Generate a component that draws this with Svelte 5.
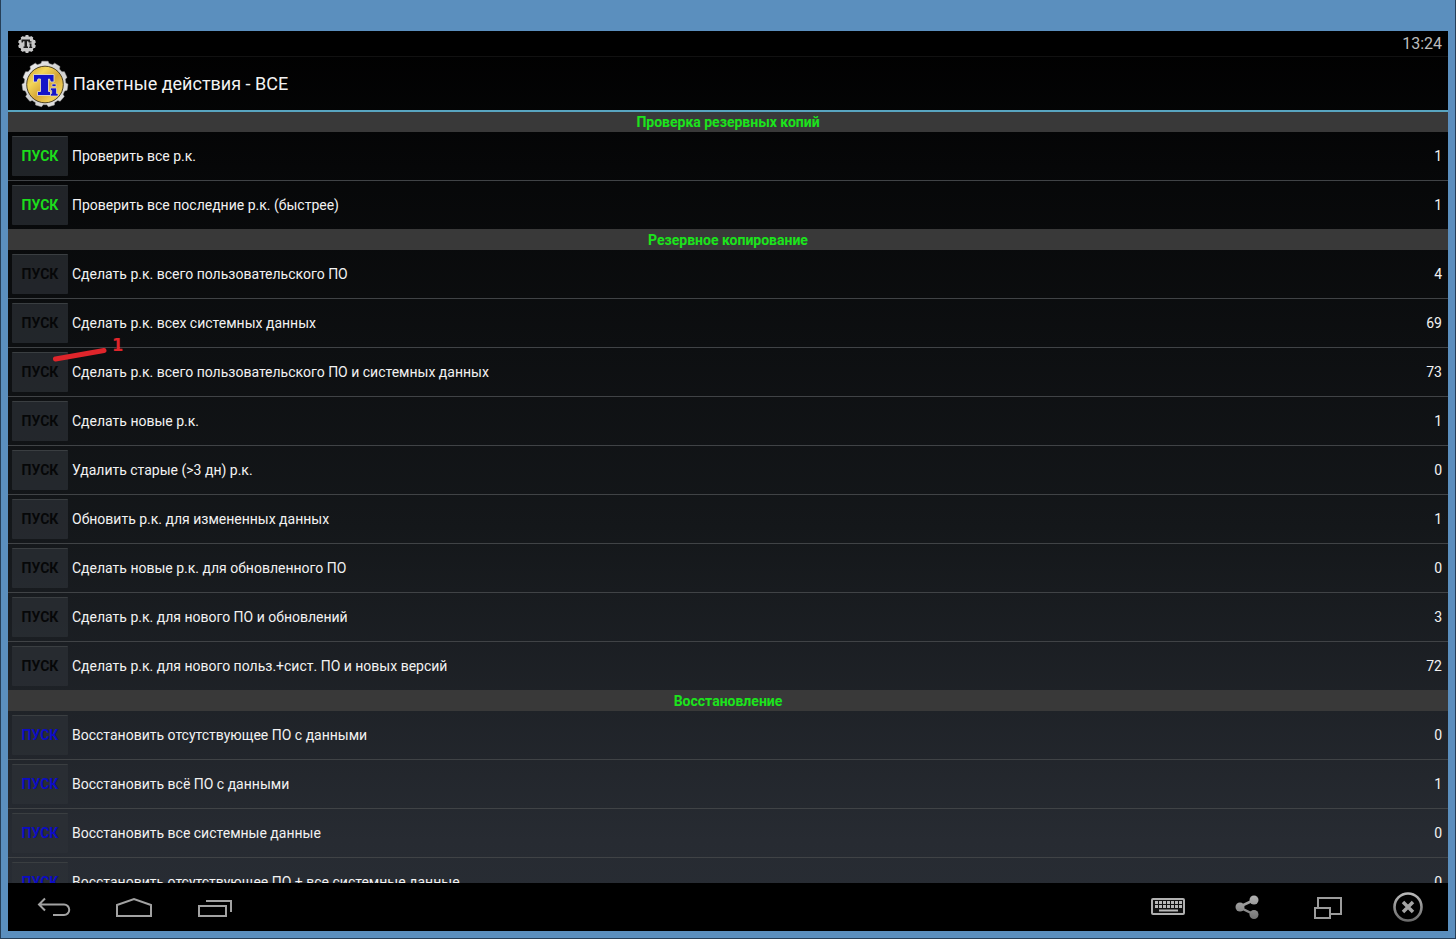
<script>
  const sections = [
    {
      title: 'Проверка резервных копий',
      tone: 'green',
      items: [
        { label: 'Проверить все р.к.', count: 1 },
        { label: 'Проверить все последние р.к. (быстрее)', count: 1 }
      ]
    },
    {
      title: 'Резервное копирование',
      tone: 'black',
      items: [
        { label: 'Сделать р.к. всего пользовательского ПО', count: 4 },
        { label: 'Сделать р.к. всех системных данных', count: 69 },
        { label: 'Сделать р.к. всего пользовательского ПО и системных данных', count: 73, mark: '1' },
        { label: 'Сделать новые р.к.', count: 1 },
        { label: 'Удалить старые (>3 дн) р.к.', count: 0 },
        { label: 'Обновить р.к. для измененных данных', count: 1 },
        { label: 'Сделать новые р.к. для обновленного ПО', count: 0 },
        { label: 'Сделать р.к. для нового ПО и обновлений', count: 3 },
        { label: 'Сделать р.к. для нового польз.+сист. ПО и новых версий', count: 72 }
      ]
    },
    {
      title: 'Восстановление',
      tone: 'blue',
      items: [
        { label: 'Восстановить отсутствующее ПО с данными', count: 0 },
        { label: 'Восстановить всё ПО с данными', count: 1 },
        { label: 'Восстановить все системные данные', count: 0 },
        { label: 'Восстановить отсутствующее ПО + все системные данные', count: 0 }
      ]
    }
  ];

  // Outline of a round cog with `teeth` teeth, centred on c.
  function cog(c, outer, inner, teeth) {
    const step = (Math.PI * 2) / teeth;
    const pts = [];
    for (let i = 0; i < teeth; i++) {
      const a = i * step - Math.PI / 2;
      for (const [k, r] of [[-0.34, inner], [-0.24, outer], [0.24, outer], [0.34, inner]]) {
        pts.push(`${(c + r * Math.cos(a + k * step)).toFixed(2)},${(c + r * Math.sin(a + k * step)).toFixed(2)}`);
      }
    }
    return pts.join(' ');
  }

  const keys = [0, 1, 2, 3, 4, 5, 6];
</script>

<div class="frame">
  <div class="screen">
    <div class="status">
      <svg width="18" height="18" viewBox="0 0 18 18" aria-hidden="true">
        <polygon points={cog(9, 9, 7.8, 10)} fill="#c8c8c8" />
        <path d="M3.500 4.500h8.500v3h-1.300l-.5-1.300H9v5.300h1v1.500H5.500v-1.500h1V6.200H5.200L4.800 7.500H3.500z" fill="#1c1c1c" />
        <path d="M11.300 8.500h2.200v3.200h.7V13h-3v-1.300h.6V9.600h-.5zM11.600 6.300h1.900v1.300h-1.900z" fill="#1c1c1c" />
      </svg>
      <time>13:24</time>
    </div>

    <header class="bar">
      <svg width="48" height="48" viewBox="0 0 48 48" aria-hidden="true">
        <defs>
          <linearGradient id="rim" x1="0" y1="0" x2="1" y2="1">
            <stop offset="0" stop-color="#f4f4f4" />
            <stop offset="0.5" stop-color="#cfcfcf" />
            <stop offset="1" stop-color="#e6e6e6" />
          </linearGradient>
          <linearGradient id="gold" x1="0" y1="0" x2="1" y2="1">
            <stop offset="0" stop-color="#cf9d2c" />
            <stop offset="0.3" stop-color="#f3d658" />
            <stop offset="0.55" stop-color="#d6a637" />
            <stop offset="0.8" stop-color="#f0cf58" />
            <stop offset="1" stop-color="#b98823" />
          </linearGradient>
        </defs>
        <polygon points={cog(24, 23, 20.800, 11)} fill="url(#rim)" stroke="#a8a8a8" stroke-width="0.500" stroke-linejoin="round" />
        <circle cx="24" cy="24.500" r="18.300" fill="url(#gold)" stroke="#3c3218" stroke-width="0.900" />
        <path d="M12.500 14.500h20.500v7.500h-3.500l-1-3H27.500v12.500h2v4H16.500v-4h3v-12.500h-2.500l-1 3h-3.500z" fill="#1414c8" stroke="#e3dcc0" stroke-width="0.900" />
        <path d="M29.500 28h6v5.500h1.500v2.500h-7.500v-2.500h1.200V30.500h-1.200zM31 24h4v2.500h-4z" fill="#1414c8" stroke="#e3dcc0" stroke-width="0.700" />
      </svg>
      <h1>Пакетные действия - ВСЕ</h1>
    </header>

    <main>
      {#each sections as section}
        <section>
          <h2>{section.title}</h2>
          <ul>
            {#each section.items as item}
              <li>
                <button type="button" class="run {section.tone}" aria-label={`ПУСК: ${item.label}`}>ПУСК</button>
                <span class="label">{item.label}</span>
                <span class="count">{item.count}</span>
                {#if item.mark}
                  <div class="mark">
                    <svg width="56" height="16" viewBox="0 0 56 16" aria-hidden="true">
                      <path d="M3.500 12L52 3.500" stroke="#e0252b" stroke-width="5" stroke-linecap="round" />
                    </svg>
                    <b>{item.mark}</b>
                  </div>
                {/if}
              </li>
            {/each}
          </ul>
        </section>
      {/each}
    </main>

    <nav>
      <div class="group">
        <button type="button" aria-label="Назад">
          <svg width="36" height="24" viewBox="0 0 36 24" fill="none" stroke="#a2a2a2" stroke-width="2">
            <path d="M9 3.500L3 9.500l6 6M3.500 9.500H28a5 5 0 0 1 0 10.500H17" />
          </svg>
        </button>
        <button type="button" aria-label="Домой">
          <svg width="40" height="24" viewBox="0 0 40 24" fill="none" stroke="#a2a2a2" stroke-width="2">
            <path d="M3 21V10L20 4l17 6v11z" />
          </svg>
        </button>
        <button type="button" aria-label="Недавние">
          <svg width="36" height="24" viewBox="0 0 36 24" fill="none" stroke="#a2a2a2" stroke-width="2">
            <path d="M3 11h27v10H3zM10 6h25v11" />
          </svg>
        </button>
      </div>
      <div class="group">
        <button type="button" aria-label="Клавиатура">
          <svg width="36" height="20" viewBox="0 0 36 20">
            <rect x="2" y="2" width="32" height="15" rx="1" fill="#111" stroke="#b0b0b0" stroke-width="2" />
            {#each keys as k}
              <rect x={5 + k * 4} y="4" width="3" height="3" fill="#b8b8b8" />
              <rect x={5 + k * 4} y="8" width="3" height="3" fill="#b8b8b8" />
            {/each}
            <path d="M9 13.500h19" stroke="#b8b8b8" stroke-width="2" />
          </svg>
        </button>
        <button type="button" aria-label="Поделиться">
          <svg width="28" height="24" viewBox="0 0 28 24">
            <defs>
              <linearGradient id="steel" gradientUnits="userSpaceOnUse" x1="0" y1="0" x2="0" y2="24">
                <stop offset="0" stop-color="#b4b4b4" />
                <stop offset="1" stop-color="#747474" />
              </linearGradient>
            </defs>
            <path d="M20 5L5 12l15 7.500" fill="none" stroke="url(#steel)" stroke-width="2.500" />
            <circle cx="20" cy="5" r="4.500" fill="url(#steel)" />
            <circle cx="6" cy="12" r="4.500" fill="url(#steel)" />
            <circle cx="20" cy="19.500" r="4.500" fill="url(#steel)" />
          </svg>
        </button>
        <button type="button" aria-label="Окно">
          <svg width="30" height="24" viewBox="0 0 30 24" fill="#000" stroke="#9c9c9c" stroke-width="2">
            <rect x="5" y="3" width="23" height="16" />
            <rect x="2" y="13" width="15" height="10" />
          </svg>
        </button>
        <button type="button" aria-label="Закрыть">
          <svg width="32" height="32" viewBox="0 0 32 32" fill="none">
            <defs>
              <linearGradient id="ring" x1="0" y1="0" x2="0" y2="1">
                <stop offset="0" stop-color="#b8b8b8" />
                <stop offset="1" stop-color="#6c6c6c" />
              </linearGradient>
            </defs>
            <circle cx="16" cy="16" r="13.500" stroke="url(#ring)" stroke-width="2.600" />
            <path d="M11 11l10 10M21 11L11 21" stroke="#a4a4a4" stroke-width="3.500" />
          </svg>
        </button>
      </div>
    </nav>
  </div>
</div>

<style>
  :global(body) {
    margin: 0;
    background: #5b8dba;
  }
  .frame {
    box-sizing: border-box;
    height: 100vh;
    padding: 31px 7px 7px;
    background: #5b8fbe;
    border: solid #263f58;
    border-width: 0 1px 1px;
    font-family: Roboto, "Noto Sans", sans-serif;
    color: #f2f2f2;
  }
  .screen {
    height: 100%;
    display: flex;
    flex-direction: column;
    overflow: hidden;
    background: linear-gradient(#000 0, #060708 15%, #14171a 55%, #272b32 90%, #282d34 100%);
  }
  .status {
    flex: none;
    box-sizing: border-box;
    height: 26px;
    padding: 0 6px 0 10px;
    display: flex;
    align-items: center;
    justify-content: space-between;
    background: #000;
    border-bottom: 1px solid #111;
  }
  time {
    font-size: 16px;
    line-height: 24px;
    color: #bcbcbc;
  }
  .bar {
    flex: none;
    box-sizing: border-box;
    height: 55px;
    padding: 1px 13px 0;
    display: flex;
    align-items: center;
    gap: 4px;
    border-bottom: 2px solid #58a5c0;
  }
  h1 {
    margin: 0;
    font-size: 18px;
    font-weight: 400;
    line-height: 24px;
  }
  main {
    flex: 1;
    min-height: 0;
    overflow: hidden;
  }
  h2 {
    margin: 0;
    box-sizing: border-box;
    height: 20px;
    background: #393939;
    color: #1ce41c;
    font-size: 14px;
    font-weight: 700;
    line-height: 20px;
    text-align: center;
  }
  ul {
    margin: 0;
    padding: 0;
    list-style: none;
  }
  li {
    position: relative;
    box-sizing: border-box;
    height: 49px;
    padding: 0 6px 0 4px;
    display: flex;
    align-items: center;
    gap: 4px;
    border-bottom: 1px solid #404346;
    font-size: 14px;
    line-height: 20px;
  }
  li:last-child {
    border-bottom-color: #393939;
  }
  .run {
    width: 56px;
    height: 40px;
    padding: 0 0 1px;
    border: 0;
    border-top: 1px solid #3a3e41;
    border-radius: 1px;
    background: rgba(44, 49, 54, 0.7);
    font: 700 14px/20px Roboto, "Noto Sans", sans-serif;
  }
  .green { color: #1cdc1c; }
  .black { color: #060708; }
  .blue { color: #0c0cc4; }
  .label {
    flex: 1;
  }
  .mark {
    position: absolute;
    left: 44px;
    top: -13px;
    display: flex;
    align-items: flex-start;
    gap: 4px;
    color: #e0252b;
  }
  .mark svg {
    margin-top: 12px;
  }
  .mark b {
    font: 700 18px/20px "DejaVu Sans Condensed", "DejaVu Sans", sans-serif;
  }
  nav {
    flex: none;
    height: 48px;
    display: flex;
    justify-content: space-between;
    background: #000;
  }
  .group {
    display: flex;
    padding: 0 0 0 6px;
  }
  nav button {
    width: 80px;
    padding: 0;
    border: 0;
    background: none;
    display: flex;
    align-items: center;
    justify-content: center;
  }
</style>
